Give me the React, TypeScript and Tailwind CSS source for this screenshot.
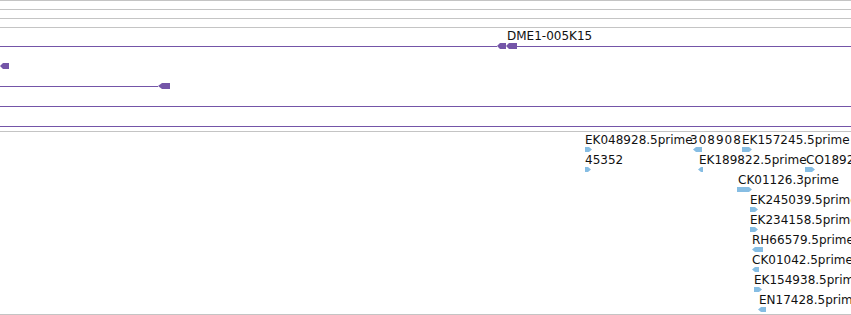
type Dir = "L" | "R";

const PURPLE = "#7455a8";
const BLUE = "#86bde3";

function Arrow({ w, h, dir, color, tip = 3, className = "" }: { w: number; h: number; dir: Dir; color: string; tip?: number; className?: string }) {
  const pts =
    dir === "R"
      ? `0,0 ${w - tip},0 ${w},${h / 2} ${w - tip},${h} 0,${h}`
      : `0,${h / 2} ${tip},0 ${w},0 ${w},${h} ${tip},${h}`;
  return (
    <svg className={`block shrink-0 ${className}`} width={w} height={h} viewBox={`0 0 ${w} ${h}`}>
      <polygon points={pts} fill={color} />
    </svg>
  );
}

type Item = { label: string; x: number; off: number; fw: number; dir: Dir; wide?: boolean };

// x = genomic position of the label on the canvas, off = feature offset from label
const lowerRows: Item[][] = [
  [
    { label: "EK048928.5prime", x: 585, off: 0, fw: 7, dir: "R" },
    { label: "308908", x: 690, off: 3, fw: 9, dir: "L", wide: true },
    { label: "EK157245.5prime", x: 742, off: 0, fw: 10, dir: "R" },
  ],
  [
    { label: "45352", x: 585, off: 0, fw: 6, dir: "R" },
    { label: "EK189822.5prime", x: 699, off: -1, fw: 5, dir: "L" },
    { label: "CO189245.5prime", x: 806, off: -1, fw: 10, dir: "R" },
  ],
  [{ label: "CK01126.3prime", x: 738, off: -1, fw: 15, dir: "R" }],
  [{ label: "EK245039.5prime", x: 750, off: 0, fw: 8, dir: "R" }],
  [{ label: "EK234158.5prime", x: 750, off: 0, fw: 8, dir: "R" }],
  [{ label: "RH66579.5prime", x: 752, off: 0, fw: 11, dir: "L" }],
  [{ label: "CK01042.5prime", x: 752, off: 0, fw: 7, dir: "L" }],
  [{ label: "EK154938.5prime", x: 754, off: 0, fw: 8, dir: "R" }],
  [{ label: "EN17428.5prime", x: 759, off: -1, fw: 8, dir: "L" }],
];

export default function App() {
  return (
    <div
      className="w-[851px] h-[315px] overflow-hidden bg-white text-[12px] leading-[14px] text-[#111]"
      style={{ fontFamily: '"DejaVu Sans", sans-serif' }}
    >
      {/* ruler lines */}
      <div className="flex flex-col">
        <div className="h-[9px] border-t border-[#c4c4c4]" />
        <div className="h-[9px] border-t border-[#c4c4c4]" />
        <div className="h-[9px] border-t border-[#c4c4c4]" />
        <div className="h-[9px] border-t border-[#c4c4c4]" />
      </div>

      {/* clone track */}
      <div className="flex flex-col h-[95px]">
        <div className="relative h-5 flex items-center">
          <div className="absolute left-[507px] top-[-7px] whitespace-nowrap">DME1-005K15</div>
          <div className="w-[497px] h-px bg-[#7455a8]" />
          <Arrow w={9} h={6} dir="L" color={PURPLE} />
          <Arrow w={11} h={6} dir="L" color={PURPLE} />
          <div className="flex-1 h-px bg-[#7455a8]" />
        </div>
        <div className="h-5 flex items-center">
          <Arrow w={9} h={6} dir="L" color={PURPLE} />
        </div>
        <div className="h-5 flex items-center">
          <div className="w-[158px] h-px bg-[#7455a8]" />
          <Arrow w={12} h={6} dir="L" color={PURPLE} tip={4} />
        </div>
        <div className="h-5 flex items-center">
          <div className="flex-1 h-px bg-[#7455a8]" />
        </div>
        <div className="h-[15px] pt-[10px]">
          <div className="h-px bg-[#7455a8]" />
        </div>
      </div>

      {/* EST track */}
      <div className="flex flex-col h-[183px] border-t border-[#c4c4c4]">
        {lowerRows.map((row, i) => (
          <div key={i} className="relative h-5 shrink-0">
            {row.map((it) => (
              <div key={it.label} className="absolute top-px flex flex-col" style={{ left: it.x }}>
                <div className={`whitespace-nowrap ${it.wide ? "tracking-[1px]" : ""}`}>{it.label}</div>
                <Arrow w={it.fw} h={5} dir={it.dir} color={BLUE} className={it.off === 3 ? "ml-[3px]" : it.off === -1 ? "-ml-px" : ""} />
              </div>
            ))}
          </div>
        ))}
      </div>
      <div className="border-t border-[#c4c4c4]" />
    </div>
  );
}
